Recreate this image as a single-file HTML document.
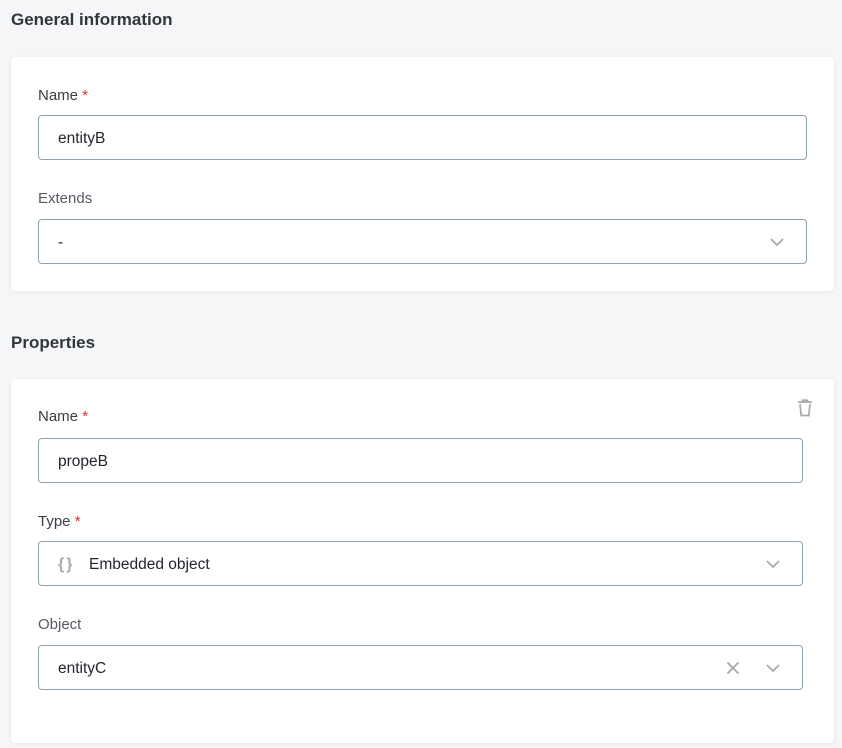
<!DOCTYPE html>
<html><head><meta charset="utf-8"><style>
*{box-sizing:border-box;margin:0;padding:0}
body{width:842px;height:748px;background:#f5f6f8;font-family:"Liberation Sans",sans-serif;position:relative;overflow:hidden;color:#2a2d34}
.h{position:absolute;left:11px;font-size:17px;font-weight:bold;color:#32353d}
.card{position:absolute;left:11px;width:823px;background:#fff;border-radius:4px;box-shadow:0 1px 4px rgba(0,0,0,.07)}
.lbl{position:absolute;left:38px;font-size:15px;color:#555a63}
.lbl b{color:#e3262f;font-weight:normal}
.in{position:absolute;left:38px;height:45px;border:1px solid #8ea3ad;border-radius:4px;font-size:15.5px;padding-left:19px;line-height:45px;color:#22252c}
.ic{position:absolute;top:15px}
</style></head><body>
<div class="h" style="top:10px">General information</div>
<div class="card" style="top:57px;height:234px"></div>
<div class="lbl" style="top:87px;color:#3a3d45">Name <b>*</b></div>
<div class="in" style="top:115px;width:769px">entityB</div>
<div class="lbl" style="top:190px">Extends</div>
<div class="in" style="top:219px;width:769px">-
<svg class="ic" style="right:22px" width="14" height="14" viewBox="0 0 14 14"><path d="M1 4l6 6 6-6" fill="none" stroke="#a6a9ae" stroke-width="1.8"/></svg></div>

<div class="h" style="top:333px">Properties</div>
<div class="card" style="top:379px;height:364px"></div>
<svg style="position:absolute;left:797px;top:399px" width="16" height="18" viewBox="0 0 16 18"><path d="M1 3h14M5.5 3V1.3h5V3M3 5l1.2 11.5h7.6L13 5" fill="none" stroke="#a8abb0" stroke-width="1.8"/></svg>
<div class="lbl" style="top:408px;color:#3a3d45">Name <b>*</b></div>
<div class="in" style="top:438px;width:765px">propeB</div>
<div class="lbl" style="top:513px;color:#3a3d45">Type <b>*</b></div>
<div class="in" style="top:541px;width:765px;padding-left:50px">
<span style="position:absolute;left:19px;top:0;color:#a8abb0;font-size:16px;font-weight:bold;letter-spacing:2px">{}</span>Embedded object
<svg class="ic" style="right:22px" width="14" height="14" viewBox="0 0 14 14"><path d="M1 4l6 6 6-6" fill="none" stroke="#a6a9ae" stroke-width="1.8"/></svg></div>
<div class="lbl" style="top:616px">Object</div>
<div class="in" style="top:645px;width:765px">entityC
<svg class="ic" style="right:62px" width="14" height="14" viewBox="0 0 14 14"><path d="M1.5 1.5l11 11M12.5 1.5l-11 11" fill="none" stroke="#a6a9ae" stroke-width="1.8"/></svg>
<svg class="ic" style="right:22px" width="14" height="14" viewBox="0 0 14 14"><path d="M1 4l6 6 6-6" fill="none" stroke="#a6a9ae" stroke-width="1.8"/></svg></div>
</body></html>
